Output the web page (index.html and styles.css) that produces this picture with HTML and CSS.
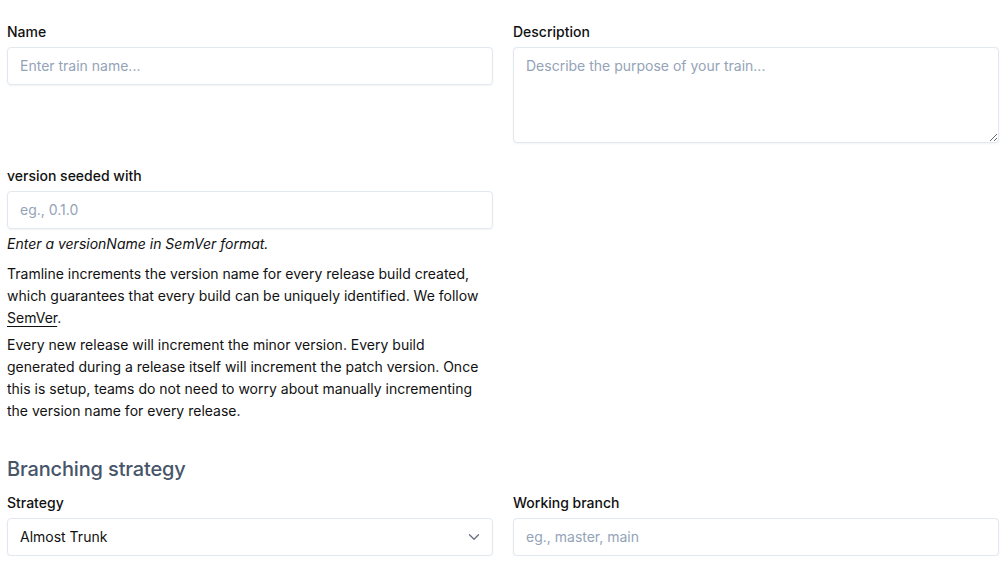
FILE: index.html
```html
<!DOCTYPE html>
<html>
<head>
<meta charset="utf-8">
<link rel="stylesheet" href="styles.css">
</head>
<body>
<main class="page">
  <section class="grid">
    <div class="field">
      <label class="label" for="name">Name</label>
      <input class="input" id="name" type="text" placeholder="Enter train name...">
    </div>
    <div class="field">
      <label class="label" for="desc">Description</label>
      <textarea class="input textarea" id="desc" placeholder="Describe the purpose of your train..."></textarea>
    </div>
    <div class="field">
      <label class="label" for="ver">version seeded with</label>
      <input class="input" id="ver" type="text" placeholder="eg., 0.1.0">
      <p class="help">Enter a versionName in SemVer format.</p>
      <p class="para first">Tramline increments the version name for every release build created, which guarantees that every build can be uniquely identified. We follow <a class="link" href="#">SemVer</a>.</p>
      <p class="para">Every new release will increment the minor version. Every build generated during a release itself will increment the patch version. Once this is setup, teams do not need to worry about manually incrementing the version name for every release.</p>
    </div>
  </section>
  <h2 class="heading">Branching strategy</h2>
  <section class="grid">
    <div class="field">
      <label class="label" for="strategy">Strategy</label>
      <div class="select-wrap">
        <select class="input select" id="strategy">
          <option>Almost Trunk</option>
        </select>
        <svg class="chevron" width="12" height="8" viewBox="0 0 12 8" fill="none"><path d="M1.5 1.8 L6 6.2 L10.5 1.8" stroke="#6b7280" stroke-width="1.4" stroke-linecap="round" stroke-linejoin="round"/></svg>
      </div>
    </div>
    <div class="field">
      <label class="label" for="branch">Working branch</label>
      <input class="input" id="branch" type="text" placeholder="eg., master, main">
    </div>
  </section>
</main>
</body>
</html>
```

FILE: styles.css
```css
* { box-sizing: border-box; }
html, body { margin: 0; padding: 0; background: #ffffff; }
body {
  font-family: Inter, "Noto Sans", sans-serif;
  font-size: 14px;
  color: #111111;
}
.page { padding: 22px 7px 0 7px; }
.grid {
  display: grid;
  grid-template-columns: 1fr 1fr;
  column-gap: 20px;
  row-gap: 23px;
}
.field { display: flex; flex-direction: column; min-width: 0; }
.label {
  display: block;
  font-size: 14px;
  font-weight: 500;
  line-height: 20px;
  margin-bottom: 5px;
  color: #111;
}
.input {
  display: block;
  width: 100%;
  height: 38px;
  padding: 0 12px 1px 12px;
  border: 1px solid #e2e8f0;
  border-radius: 4px;
  background: #fff;
  box-shadow: 0 1px 2px rgba(15, 23, 42, 0.05);
  font-family: Inter, "Noto Sans", sans-serif;
  font-size: 14px;
  color: #1f2937;
  outline: none;
}
.input::placeholder { color: #94a3b8; opacity: 1; }
.textarea {
  height: 96px;
  padding: 8px 12px;
  line-height: 20px;
  resize: vertical;
}
.help {
  margin: 5px 0 0 0;
  font-style: italic;
  line-height: 20px;
  color: #111;
}
.para {
  margin: 5px 0 0 0;
  line-height: 22px;
  color: #111;
}
.para.first { margin-top: 9px; }
.link { color: #111; text-decoration: underline; text-underline-offset: 3px; }
.heading {
  margin: 33px 0 10px 0;
  font-size: 20px;
  font-weight: 500;
  line-height: 28px;
  letter-spacing: -0.15px;
  color: #475569;
}
.select-wrap { position: relative; }
.select {
  appearance: none;
  -webkit-appearance: none;
  color: #111;
  padding-right: 36px;
}
.chevron {
  position: absolute;
  right: 13px;
  top: 15px;
  pointer-events: none;
}
```
